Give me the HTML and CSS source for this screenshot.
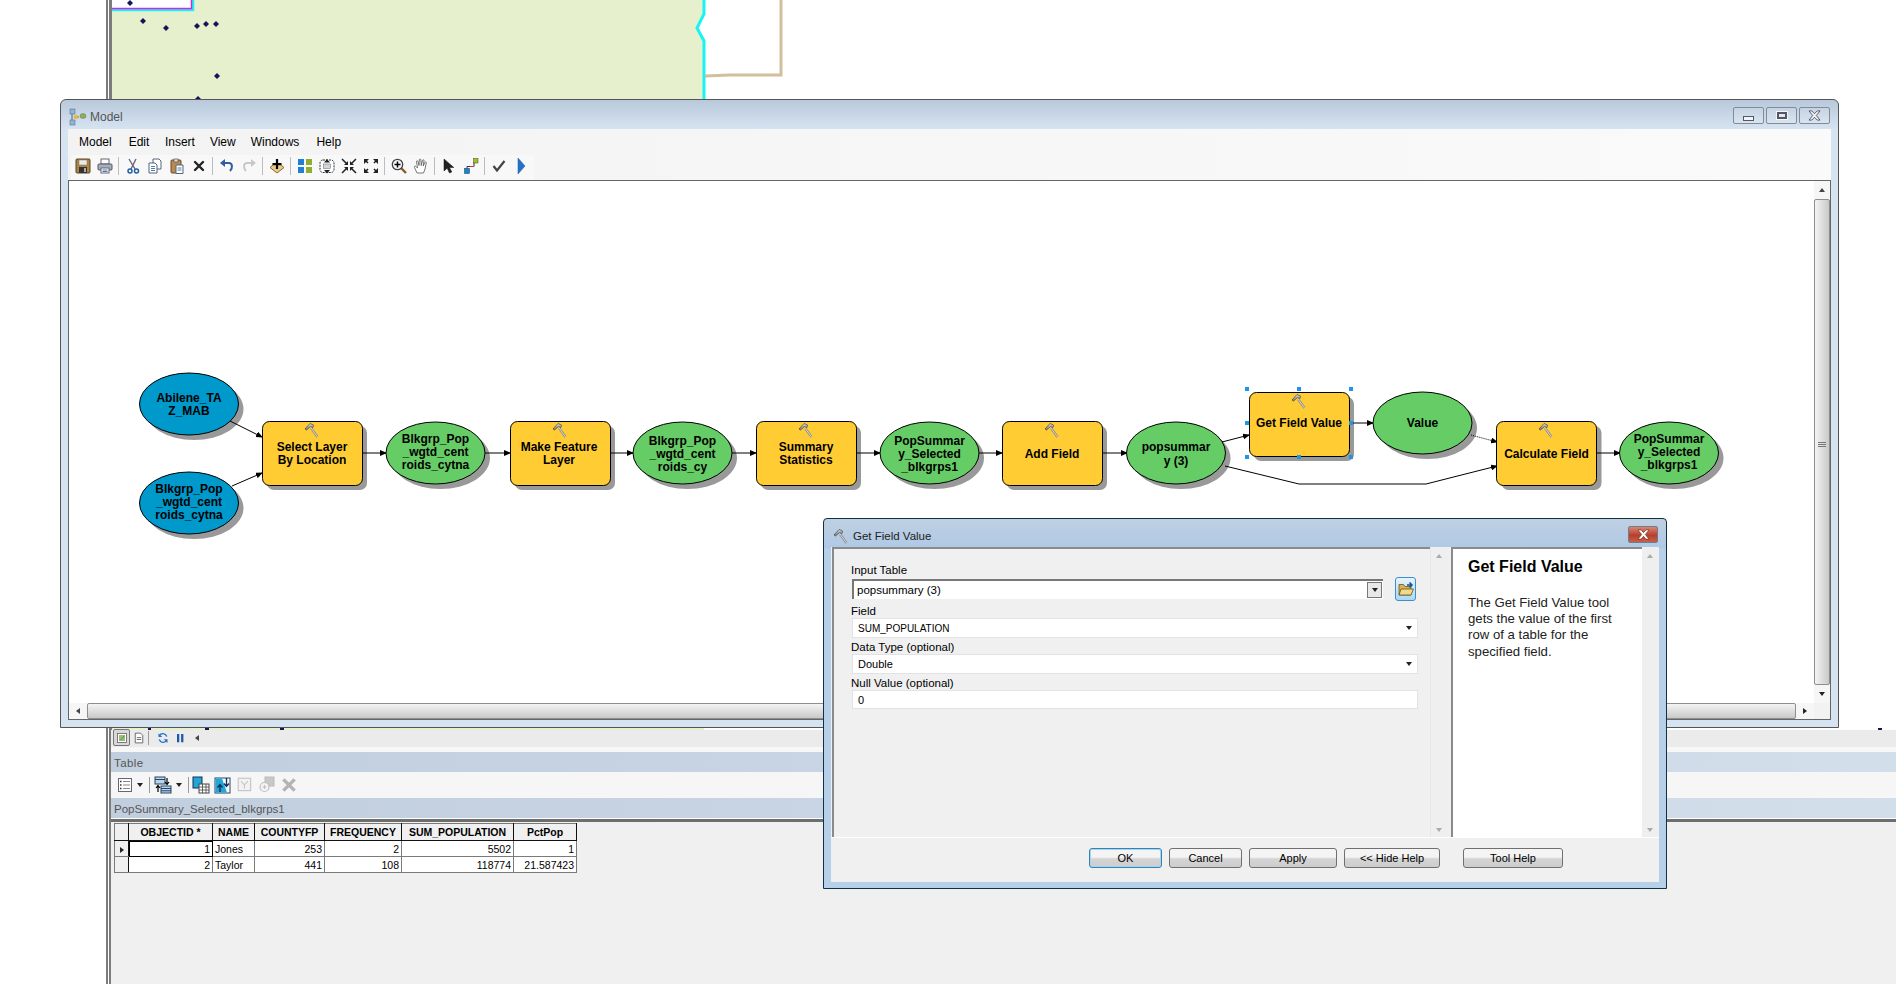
FILE: index.html
```html
<!DOCTYPE html>
<html lang="en">
<head>
<meta charset="utf-8">
<title>Model</title>
<link rel="stylesheet" href="styles.css">
</head>
<body>
<svg class="defs" aria-hidden="true">
  <defs>
    <linearGradient id="gHead" x1="0" y1="0" x2="0" y2="1"><stop offset="0" stop-color="#ddd"/><stop offset="1" stop-color="#777"/></linearGradient>
    <marker id="ah" markerWidth="7" markerHeight="6" refX="6" refY="3" orient="auto" markerUnits="userSpaceOnUse"><path d="M0 0L7 3L0 6Z" fill="#000"/></marker>
    <symbol id="i-hammer" viewBox="0 0 16 16"><path d="M7 6L13.500 15" stroke="#8a8a8a" stroke-width="2.200" fill="none"/><path d="M7 6L13.500 15" stroke="#e8e8e8" stroke-width=".8" fill="none"/><path d="M1 7L6 1.500L9.500 3L9 5.500L6.500 4.500L2.500 8Z" fill="url(#gHead)" stroke="#444" stroke-width=".7"/></symbol>
    <symbol id="i-save" viewBox="0 0 16 16"><rect x="1" y="1" width="14" height="14" rx="1" fill="#a9854a" stroke="#5b4520"/><rect x="4" y="2" width="8" height="5" fill="#e9e9e9" stroke="#8a7a5a" stroke-width=".5"/><rect x="4" y="9" width="8" height="6" fill="#333"/><rect x="9" y="10" width="2" height="4" fill="#aaa"/></symbol>
    <symbol id="i-print" viewBox="0 0 16 16"><rect x="4" y="1" width="8" height="5" fill="#fff" stroke="#667"/><rect x="1" y="6" width="14" height="6" rx="1" fill="#a8b0b8" stroke="#556"/><rect x="4" y="10" width="8" height="5" fill="#fff" stroke="#667"/><path d="M5.500 12h5M5.500 13.500h5" stroke="#4a7fb5"/></symbol>
    <symbol id="i-cut" viewBox="0 0 16 16"><path d="M4 1L10 11M11 1L6 11" stroke="#667" stroke-width="1.400" fill="none"/><circle cx="5" cy="13" r="2" fill="none" stroke="#1f5fa8" stroke-width="1.500"/><circle cx="11.500" cy="13" r="2" fill="none" stroke="#1f5fa8" stroke-width="1.500"/></symbol>
    <symbol id="i-copy" viewBox="0 0 16 16"><path d="M6 1h6l2 2v8H6Z" fill="#fff" stroke="#567"/><path d="M2 5h6l2 2v8H2Z" fill="#fff" stroke="#567"/><path d="M4 8.500h4M4 10.500h4M4 12.500h4" stroke="#4a7fb5"/></symbol>
    <symbol id="i-paste" viewBox="0 0 16 16"><rect x="2" y="2" width="10" height="13" rx="1" fill="#b98a55" stroke="#6b4a25"/><rect x="5" y="1" width="4" height="3" fill="#ddd" stroke="#555" stroke-width=".7"/><path d="M7 7h7v8.500H7Z" fill="#fff" stroke="#567"/><path d="M8.500 10h4M8.500 12h4" stroke="#4a7fb5"/></symbol>
    <symbol id="i-del" viewBox="0 0 16 16"><path d="M4 4L12 12M12 4L4 12" stroke="#222" stroke-width="2.400" stroke-linecap="round"/></symbol>
    <symbol id="i-undo" viewBox="0 0 16 16"><path d="M5 5H10C13.500 5 14 10 11 13" stroke="#2f5f9e" stroke-width="2" fill="none"/><path d="M6 1L1 5L6 9Z" fill="#2f5f9e"/></symbol>
    <symbol id="i-redo" viewBox="0 0 16 16"><path d="M11 5H6C2.500 5 2 10 5 13" stroke="#c8c8c8" stroke-width="2" fill="none"/><path d="M10 1L15 5L10 9Z" fill="#c8c8c8"/></symbol>
    <symbol id="i-add" viewBox="0 0 16 16"><path d="M8 15L15 9.500L12 7H4L1 9.500Z" fill="#e9c98a" stroke="#8a6a30"/><path d="M8 1V11M3.500 6H12.500" stroke="#000" stroke-width="2.200"/></symbol>
    <symbol id="i-grid" viewBox="0 0 16 16"><rect x="1" y="1" width="6" height="6" fill="#1f7fd6"/><rect x="9" y="1" width="6" height="6" fill="#8fae2e"/><rect x="1" y="9" width="6" height="6" fill="#1f7fd6"/><rect x="9" y="9" width="6" height="6" fill="#8fae2e"/></symbol>
    <symbol id="i-fit" viewBox="0 0 16 16"><rect x="1" y="2" width="14" height="12.500" rx="3" fill="#fff" stroke="#333" stroke-dasharray="2 1"/><path d="M8 1L5 4.500H11ZM8 15.500L5 12H11Z" fill="#222"/><rect x="4.500" y="6" width="7" height="4.500" fill="#cfd6dc" stroke="#666" stroke-width=".5"/></symbol>
    <symbol id="i-in" viewBox="0 0 16 16"><path d="M1 1L6 6M15 1L10 6M1 15L6 10M15 15L10 10" stroke="#222" stroke-width="1.500"/><path d="M7 7H3L7 3ZM9 7H13L9 3ZM7 9H3L7 13ZM9 9H13L9 13Z" fill="#222"/></symbol>
    <symbol id="i-out" viewBox="0 0 16 16"><path d="M5 5L2 2M11 5L14 2M5 11L2 14M11 11L14 14" stroke="#222" stroke-width="1.500"/><path d="M1 1H6L1 6ZM15 1H10L15 6ZM1 15H6L1 10ZM15 15H10L15 10Z" fill="#222"/></symbol>
    <symbol id="i-zoom" viewBox="0 0 16 16"><path d="M10 10L15 15" stroke="#8a5a2a" stroke-width="2.400"/><circle cx="6.500" cy="6.500" r="5.200" fill="#f4f8fc" stroke="#444" stroke-width="1.300"/><path d="M6.500 3.500V9.500M3.500 6.500H9.500" stroke="#000" stroke-width="1.500"/></symbol>
    <symbol id="i-hand" viewBox="0 0 16 16"><path d="M4 15L1.500 9.500C1 8 2.500 7.500 3.500 9L4.500 10L3.500 3.500C3.500 2.500 4.800 2.500 5 3.500L6 7.500L6.300 1.800C6.500 .8 7.800 .8 7.900 1.800L8.200 7.500L9.600 2.300C9.900 1.400 11 1.600 11 2.600L10.200 8L12 4.300C12.500 3.500 13.500 4 13.300 4.800L12 11L10.500 15Z" fill="#fff" stroke="#555" stroke-width=".8"/></symbol>
    <symbol id="i-sel" viewBox="0 0 16 16"><path d="M3 1V13L6.200 10.200L8.500 15L10.800 14L8.500 9.500H12.800Z" fill="#222" stroke="#111" stroke-width=".5"/></symbol>
    <symbol id="i-conn" viewBox="0 0 16 16"><path d="M4 11V8.500H11V4" fill="none" stroke="#333" stroke-width="1"/><path d="M7 8.500H11" stroke="#c33"/><rect x="1.500" y="10.500" width="5" height="5" fill="#1f7fd6" stroke="#145" stroke-width=".5"/><rect x="10.500" y=".5" width="4.500" height="4.500" fill="#9bbf2e" stroke="#450" stroke-width=".5"/></symbol>
    <symbol id="i-check" viewBox="0 0 16 16"><path d="M2.500 8L6 12.500L13.500 3" fill="none" stroke="#444" stroke-width="2.200"/></symbol>
    <symbol id="i-run" viewBox="0 0 16 16"><path d="M5 0L12 8L5 16Z" fill="#2472c8" stroke="#1a5ea8" stroke-width=".5"/></symbol>
    <symbol id="i-model" viewBox="0 0 18 18"><rect x="1" y="1" width="5" height="5" fill="#8cb4dc" stroke="#567" stroke-width=".5"/><rect x="1" y="12" width="5" height="5" fill="#8cb4dc" stroke="#567" stroke-width=".5"/><path d="M3 6V12M6 9H10" stroke="#567"/><ellipse cx="7" cy="9" rx="2.500" ry="2" fill="#e8b83a"/><ellipse cx="14" cy="8" rx="3" ry="2.500" fill="#8fb04a" stroke="#567" stroke-width=".4"/></symbol>
    <symbol id="i-folder" viewBox="0 0 16 16"><path d="M1 14V3.500H5.500L7 5.500H13V14Z" fill="#d9b34d" stroke="#6b5420" stroke-width=".8"/><path d="M1 14L3 8H15.500L13 14Z" fill="#f1d98a" stroke="#6b5420" stroke-width=".8"/><path d="M9 4H13M11.500 1.500L14 4L11.500 6.500" fill="none" stroke="#1d4f96" stroke-width="1.500"/></symbol>
    <symbol id="i-list" viewBox="0 0 16 16"><rect x="1.500" y="1.500" width="13" height="13" fill="#fff" stroke="#667"/><path d="M6 4.500H13M6 8H13M6 11.500H13" stroke="#888"/><path d="M3 4.500h1.500M3 8h1.500M3 11.500h1.500" stroke="#333" stroke-width="1.400"/></symbol>
    <symbol id="i-relate" viewBox="0 0 18 18"><rect x="1" y="1" width="10" height="7" fill="#bcd4ea" stroke="#246"/><rect x="7" y="10" width="10" height="7" fill="#bcd4ea" stroke="#246"/><path d="M1 3.500H11M7 12.500H17M7 14.800H17" stroke="#246"/><path d="M13 2V8M11 6L13 8.500L15 6" fill="none" stroke="#000" stroke-width="1.200"/><path d="M4 16V10M2 12L4 9.500L6 12" fill="none" stroke="#000" stroke-width="1.200"/></symbol>
    <symbol id="i-selattr" viewBox="0 0 18 18"><rect x="1" y="1" width="9" height="11" fill="#23a5d6" stroke="#135"/><rect x="7" y="8" width="10" height="9" fill="#fff" stroke="#444"/><path d="M7 11H17M7 14H17M10.500 8V17M14 8V17" stroke="#444" stroke-width=".8"/></symbol>
    <symbol id="i-switch" viewBox="0 0 18 18"><rect x="1" y="2" width="15" height="15" fill="#fff" stroke="#246"/><path d="M1.500 2.500H8L13 16.500H1.500Z" fill="#23a5d6"/><path d="M12.500 2V10M10 7.500L12.500 10.500L15 7.500M6 16V9M3.500 11.500L6 8.500L8.500 11.500" fill="none" stroke="#12335e" stroke-width="1.400"/></symbol>
    <symbol id="i-filter" viewBox="0 0 16 16"><rect x="2" y="2" width="11" height="11" fill="#f2f2f2" stroke="#c4c4c4"/><path d="M4.500 4.500L7.500 8V11M10.500 4.500L7.500 8" fill="none" stroke="#c4c4c4"/></symbol>
    <symbol id="i-zoomsel" viewBox="0 0 18 18"><rect x="7" y="1" width="9" height="9" fill="#c8c8c8" stroke="#bbb"/><circle cx="6.500" cy="11" r="4.500" fill="#f4f4f4" stroke="#c0c0c0" stroke-width="1.200"/><path d="M4.500 11H8.500M6.500 9V13" stroke="#c0c0c0"/></symbol>
    <symbol id="i-x" viewBox="0 0 16 16"><path d="M3 3L13 13M13 3L3 13" stroke="#b4b4b4" stroke-width="3"/></symbol>
    <symbol id="i-mapview" viewBox="0 0 16 16"><rect x="2" y="2" width="12" height="12" fill="#fff" stroke="#555"/><rect x="4" y="4" width="8" height="8" fill="#9cbf6a"/><path d="M6 11L11 5" stroke="#2472c8"/></symbol>
    <symbol id="i-layout" viewBox="0 0 16 16"><path d="M3 1.500H10L13 4.500V14.500H3Z" fill="#fff" stroke="#444"/><path d="M5 7.500H11M5 10H11" stroke="#444"/></symbol>
    <symbol id="i-refresh" viewBox="0 0 16 16"><path d="M13 6A5.500 5.500 0 0 0 3 5M3 10A5.500 5.500 0 0 0 13 11" fill="none" stroke="#2472c8" stroke-width="1.800"/><path d="M2 1.500V6.500H7Z M14 14.500V9.500H9Z" fill="#2472c8"/></symbol>
    <symbol id="i-pause" viewBox="0 0 16 16"><path d="M4 2.500H7V13.500H4ZM9.500 2.500H12.500V13.500H9.500Z" fill="#1d55a8"/></symbol>
  </defs>
</svg>

<div class="app">
  <div class="map">
    <svg class="map-svg" viewBox="111 0 1785 730" width="1785" height="730">
      <rect class="m-rule" x="111" y="0" width="1" height="730"/>
      <path class="m-land" d="M112 0H704V14L697 28L704 41V730H112Z"/>
      <path class="m-edge" d="M704 0V14L697 28L704 41V728"/>
      <path class="m-tan" d="M705 76L730 75H781V0"/>
      <rect class="m-white" x="112" y="-2" width="80" height="11"/>
      <path class="m-cyan" d="M112 10H193V0"/>
      <path class="m-mag" d="M112 8.500H191.500V0"/>
      <g class="m-dots">
        <path d="M130 0l3 3-3 3-3-3Z"/><path d="M143 18l3 3-3 3-3-3Z"/><path d="M166 25l3 3-3 3-3-3Z"/>
        <path d="M197 23l3 3-3 3-3-3Z"/><path d="M206 21l3 3-3 3-3-3Z"/><path d="M216 21l3 3-3 3-3-3Z"/>
        <path d="M217 73l3 3-3 3-3-3Z"/><path d="M198 96l3 3-3 3-3-3Z"/><rect x="148" y="728" width="3" height="2"/><rect x="205" y="728" width="4" height="2"/><rect x="280" y="728" width="4" height="2"/><rect x="1878" y="728" width="4" height="2"/>
      </g>
    </svg>
  </div>
  <div class="view-bar">
    <span class="view-active"><svg class="ic14"><use href="#i-mapview"/></svg></span>
    <svg class="ic14"><use href="#i-layout"/></svg>
    <span class="sep-view"></span>
    <svg class="ic14"><use href="#i-refresh"/></svg>
    <svg class="ic14 pause"><use href="#i-pause"/></svg>
    <span class="tri-l view-tri"></span>
  </div>
  <div class="strip"></div>
  <div class="band band-tall">Table</div>
  <div class="table-tools">
    <svg class="ic16"><use href="#i-list"/></svg><span class="tri-d"></span>
    <span class="sep-tool"></span>
    <svg class="ic18"><use href="#i-relate"/></svg><span class="tri-d"></span>
    <span class="sep-tool"></span>
    <svg class="ic18 first-group"><use href="#i-selattr"/></svg>
    <svg class="ic18"><use href="#i-switch"/></svg>
    <svg class="ic18"><use href="#i-filter"/></svg>
    <svg class="ic18"><use href="#i-zoomsel"/></svg>
    <svg class="ic18"><use href="#i-x"/></svg>
  </div>
  <div class="band">PopSummary_Selected_blkgrps1</div>
  <div class="grid-area">
    <table class="grid">
      <colgroup><col class="c0"><col class="c1"><col class="c2"><col class="c3"><col class="c4"><col class="c5"><col class="c6"></colgroup>
      <thead>
        <tr><th></th><th>OBJECTID *</th><th>NAME</th><th>COUNTYFP</th><th>FREQUENCY</th><th>SUM_POPULATION</th><th>PctPop</th></tr>
      </thead>
      <tbody>
        <tr><th class="rowhead"><span class="tri-r"></span></th><td class="num active">1</td><td>Jones</td><td class="num">253</td><td class="num">2</td><td class="num">5502</td><td class="num">1</td></tr>
        <tr><th class="rowhead"></th><td class="num">2</td><td>Taylor</td><td class="num">441</td><td class="num">108</td><td class="num">118774</td><td class="num">21.587423</td></tr>
      </tbody>
    </table>
  </div>
</div>

<section class="model">
  <header class="model-title">
    <svg class="ic-model"><use href="#i-model"/></svg>
    <span class="model-name">Model</span>
    <div class="win-btns">
      <span class="win-btn"><span class="g-min"></span></span>
      <span class="win-btn"><span class="g-max"></span></span>
      <span class="win-btn"><svg class="g-x" viewBox="0 0 16 12"><path d="M2 1H5L8 4L11 1H14L10 6L14 11H11L8 8L5 11H2L6 6Z" fill="#eef2f6" stroke="#445" stroke-width=".9"/></svg></span>
    </div>
  </header>
  <div class="model-inner">
    <nav class="menu"><span>Model</span><span>Edit</span><span>Insert</span><span>View</span><span>Windows</span><span>Help</span></nav>
    <div class="tools-row">
      <div class="tools">
        <svg class="tb"><use href="#i-save"/></svg>
        <svg class="tb"><use href="#i-print"/></svg>
        <i class="tsep"></i>
        <svg class="tb"><use href="#i-cut"/></svg>
        <svg class="tb"><use href="#i-copy"/></svg>
        <svg class="tb"><use href="#i-paste"/></svg>
        <svg class="tb"><use href="#i-del"/></svg>
        <i class="tsep"></i>
        <svg class="tb"><use href="#i-undo"/></svg>
        <svg class="tb"><use href="#i-redo"/></svg>
        <i class="tsep"></i>
        <svg class="tb"><use href="#i-add"/></svg>
        <i class="tsep"></i>
        <svg class="tb"><use href="#i-grid"/></svg>
        <svg class="tb"><use href="#i-fit"/></svg>
        <svg class="tb"><use href="#i-in"/></svg>
        <svg class="tb"><use href="#i-out"/></svg>
        <i class="tsep"></i>
        <svg class="tb"><use href="#i-zoom"/></svg>
        <svg class="tb"><use href="#i-hand"/></svg>
        <i class="tsep"></i>
        <svg class="tb"><use href="#i-sel"/></svg>
        <svg class="tb"><use href="#i-conn"/></svg>
        <i class="tsep"></i>
        <svg class="tb"><use href="#i-check"/></svg>
        <svg class="tb"><use href="#i-run"/></svg>
      </div>
    </div>
    <div class="canvas">
      <svg class="diagram" viewBox="69 181 1745 522" width="1745" height="522">
        <g class="shadow">
          <ellipse cx="194" cy="409" rx="49.500" ry="31"/><ellipse cx="194" cy="508" rx="49.500" ry="31"/>
          <rect x="267" y="426" width="100" height="64" rx="7"/><ellipse cx="440.500" cy="458" rx="49.500" ry="31"/>
          <rect x="515" y="426" width="100" height="64" rx="7"/><ellipse cx="687.500" cy="458" rx="49.500" ry="31"/>
          <rect x="761" y="426" width="100" height="64" rx="7"/><ellipse cx="934.500" cy="458" rx="49.500" ry="31"/>
          <rect x="1007" y="426" width="100" height="64" rx="7"/><ellipse cx="1181" cy="458" rx="49.500" ry="31"/>
          <rect x="1254" y="397" width="100" height="64" rx="7"/><ellipse cx="1427.500" cy="428" rx="49.500" ry="31"/>
          <rect x="1501.500" y="426" width="100" height="64" rx="7"/><ellipse cx="1674" cy="458" rx="49.500" ry="31"/>
        </g>
        <g class="links">
          <path d="M230 421L262 437" marker-end="url(#ah)"/>
          <path d="M232 486L262 473" marker-end="url(#ah)"/>
          <path d="M362 453H386" marker-end="url(#ah)"/>
          <path d="M485 453H510" marker-end="url(#ah)"/>
          <path d="M732 453H756" marker-end="url(#ah)"/>
          <path d="M856 453H880" marker-end="url(#ah)"/>
          <path d="M979 453H1002" marker-end="url(#ah)"/>
          <path d="M1102 453H1127" marker-end="url(#ah)"/>
          <path d="M609 453H633" marker-end="url(#ah)"/>
          <path d="M1222 442L1249 435" marker-end="url(#ah)"/>
          <path d="M1349 423H1373" marker-end="url(#ah)"/>
          <path class="dotted" d="M1471 435L1497 442" marker-end="url(#ah)"/>
          <path d="M1225 466L1299 484H1426L1497 466" marker-end="url(#ah)"/>
          <path d="M1596 453H1620" marker-end="url(#ah)"/>
        </g>
        <g class="n-blue"><ellipse cx="189" cy="404" rx="49.500" ry="31"/><ellipse cx="189" cy="503" rx="49.500" ry="31"/></g>
        <g class="n-green">
          <ellipse cx="435.500" cy="453" rx="49.500" ry="31"/><ellipse cx="682.500" cy="453" rx="49.500" ry="31"/>
          <ellipse cx="929.500" cy="453" rx="49.500" ry="31"/><ellipse cx="1176" cy="453" rx="49.500" ry="31"/>
          <ellipse cx="1422.500" cy="423" rx="49.500" ry="31"/><ellipse cx="1669" cy="453" rx="49.500" ry="31"/>
        </g>
        <g class="n-yellow" transform="translate(.5 .5)">
          <rect x="262" y="421" width="100" height="64" rx="7"/><rect x="510" y="421" width="100" height="64" rx="7"/>
          <rect x="756" y="421" width="100" height="64" rx="7"/><rect x="1002" y="421" width="100" height="64" rx="7"/>
          <rect x="1249" y="392" width="100" height="64" rx="7"/><rect x="1496" y="421" width="100" height="64" rx="7"/>
        </g>
        <use href="#i-hammer" x="304" y="422" width="16" height="16"/>
        <use href="#i-hammer" x="552" y="422" width="16" height="16"/>
        <use href="#i-hammer" x="798" y="422" width="16" height="16"/>
        <use href="#i-hammer" x="1044" y="422" width="16" height="16"/>
        <use href="#i-hammer" x="1291" y="393" width="16" height="16"/>
        <use href="#i-hammer" x="1538" y="422" width="16" height="16"/>
        <g class="handles">
          <rect x="1245" y="387" width="4" height="4"/><rect x="1297" y="387" width="4" height="4"/><rect x="1349" y="387" width="4" height="4"/>
          <rect x="1245" y="421" width="4" height="4"/><rect x="1349" y="421" width="4" height="4"/>
          <rect x="1245" y="455" width="4" height="4"/><rect x="1297" y="455" width="4" height="4"/><rect x="1349" y="455" width="4" height="4"/>
        </g>
        <g class="labels">
          <text x="189" y="402">Abilene_TA</text><text x="189" y="415">Z_MAB</text>
          <text x="189" y="493">Blkgrp_Pop</text><text x="189" y="506">_wgtd_cent</text><text x="189" y="519">roids_cytna</text>
          <text x="312" y="451">Select Layer</text><text x="312" y="464">By Location</text>
          <text x="435.500" y="443">Blkgrp_Pop</text><text x="435.500" y="456">_wgtd_cent</text><text x="435.500" y="469">roids_cytna</text>
          <text x="559" y="451">Make Feature</text><text x="559" y="464">Layer</text>
          <text x="682.500" y="445">Blkgrp_Pop</text><text x="682.500" y="458">_wgtd_cent</text><text x="682.500" y="471">roids_cy</text>
          <text x="806" y="451">Summary</text><text x="806" y="464">Statistics</text>
          <text x="929.500" y="445">PopSummar</text><text x="929.500" y="458">y_Selected</text><text x="929.500" y="471">_blkgrps1</text>
          <text x="1052" y="458">Add Field</text>
          <text x="1176" y="451">popsummar</text><text x="1176" y="465">y (3)</text>
          <text x="1299" y="427">Get Field Value</text>
          <text x="1422.500" y="427">Value</text>
          <text x="1546.500" y="458">Calculate Field</text>
          <text x="1669" y="443">PopSummar</text><text x="1669" y="456">y_Selected</text><text x="1669" y="469">_blkgrps1</text>
        </g>
      </svg>
      <div class="vbar">
        <span class="sb-end"><span class="tri-u"></span></span>
        <span class="v-thumb"></span>
        <span class="sb-end"><span class="tri-d dark"></span></span>
      </div>
      <div class="hbar">
        <span class="sb-end h"><span class="tri-l"></span></span>
        <span class="h-thumb"></span>
        <span class="sb-end h"><span class="tri-r dark"></span></span>
      </div>
      <div class="corner"></div>
    </div>
  </div>
</section>

<section class="dialog">
  <header class="dlg-title">
    <svg class="dlg-ham"><use href="#i-hammer"/></svg>
    <span class="dlg-name">Get Field Value</span>
    <span class="dlg-close"><svg class="g-dx" viewBox="0 0 14 12"><path d="M1 1H4.500L7 4L9.500 1H13L9 6L13 11H9.500L7 8L4.500 11H1L5 6Z" fill="#fff" stroke="#6b2a20" stroke-width=".7"/></svg></span>
  </header>
  <div class="dlg-body">
    <div class="dlg-panes">
      <div class="params">
        <div class="lbl first">Input Table</div>
        <div class="combo-row">
          <div class="combo"><span class="combo-text">popsummary (3)</span><span class="combo-btn"><span class="tri-d dark"></span></span></div>
          <span class="browse"><svg class="ic16"><use href="#i-folder"/></svg></span>
        </div>
        <div class="lbl">Field</div>
        <div class="sel"><span class="caps">SUM_POPULATION</span><span class="tri-d dark"></span></div>
        <div class="lbl">Data Type (optional)</div>
        <div class="sel"><span>Double</span><span class="tri-d dark"></span></div>
        <div class="lbl">Null Value (optional)</div>
        <div class="sel input"><span>0</span></div>
      </div>
      <div class="dlg-scroll"><span class="tri-u pale"></span><span class="tri-d pale"></span></div>
      <div class="help">
        <h2 class="help-h">Get Field Value</h2>
        <p class="help-p">The Get Field Value tool gets the value of the first row of a table for the specified field.</p>
      </div>
      <div class="dlg-scroll right"><span class="tri-u pale"></span><span class="tri-d pale"></span></div>
    </div>
    <div class="dlg-btns">
      <button class="btn def w-ok">OK</button>
      <button class="btn w-ok">Cancel</button>
      <button class="btn w-apply">Apply</button>
      <button class="btn w-hide">&lt;&lt; Hide Help</button>
      <button class="btn w-tool">Tool Help</button>
    </div>
  </div>
</section>
</body>
</html>
```

FILE: styles.css
```css
html, body {
  margin: 0;
  padding: 0;
  width: 1896px;
  height: 984px;
  overflow: hidden;
  background: #fff;
  font-family: "Liberation Sans", Arial, sans-serif;
  color: #000;
}
.defs { position: absolute; width: 0; height: 0; }

/* background application */
.app {
  position: absolute;
  left: 106px;
  top: 0;
  right: 0;
  bottom: 0;
  display: flex;
  flex-direction: column;
  border-left: 5px double #7c7c7c;
}
.map { height: 730px; flex: none; }
.map-svg { display: block; }
.m-rule { fill: #7c7c7c; }
.m-land { fill: #e6f0cd; }
.m-edge { fill: none; stroke: #19f3f3; stroke-width: 3; }
.m-tan { fill: none; stroke: #d2c09c; stroke-width: 3; }
.m-white { fill: #fff; }
.m-cyan { fill: none; stroke: #19f3f3; stroke-width: 2.5; }
.m-mag { fill: none; stroke: #e020e0; stroke-width: 1.5; }
.m-dots { fill: #14145a; }

.view-bar {
  height: 17px;
  flex: none;
  box-sizing: border-box;
  padding: 0 0 2px 2px;
  display: flex;
  align-items: center;
  gap: 3px;
  background: #ebebeb;
}
.view-active {
  width: 15px;
  height: 15px;
  box-sizing: content-box;
  display: flex;
  align-items: center;
  justify-content: center;
  border: 1px solid #777;
  border-radius: 2px;
  background: #d8d8d8;
  flex: none;
}
.ic14 { width: 12px; height: 12px; flex: none; }
.pause { margin-left: 2px; }
.view-tri { margin-left: 6px; }
.sep-view { width: 1px; height: 14px; background: #9a9a9a; margin-right: 5px; flex: none; }
.strip { height: 5px; flex: none; background: #f7f7f7; }
.band {
  height: 20px;
  flex: none;
  padding-left: 3px;
  line-height: 22px;
  font-size: 11.5px;
  color: #555;
  background: linear-gradient(90deg, #c1cede, #d3deeb);
}
.band-tall { letter-spacing: .4px; }
.table-tools {
  height: 26px;
  flex: none;
  display: flex;
  align-items: center;
  gap: 4px;
  padding-left: 6px;
  background: #f6f6f6;
}
.table-tools .tri-d { margin-left: 0; }
.sep-tool { width: 1px; height: 16px; background: #9a9a9a; margin-left: 2px; flex: none; }
.first-group { margin-left: -1px; }
.ic16 { width: 16px; height: 16px; flex: none; }
.ic18 { width: 18px; height: 18px; flex: none; }
.grid-area {
  flex: 1;
  padding: 1px 0 0 3px;
  border-top: 3px solid #6e6e6e;
  margin-top: 1px;
  background: #f0f0f0;
}
.grid {
  border-collapse: collapse;
  table-layout: fixed;
  width: 463px;
  font-size: 10.5px;
}
.c0 { width: 14px; }
.c1 { width: 84px; }
.c2 { width: 42px; }
.c3 { width: 70px; }
.c4 { width: 77px; }
.c5 { width: 112px; }
.c6 { width: 63px; }
.grid th, .grid td {
  border: 1px solid #7a7a7a;
  padding: 0 2px;
  line-height: 14px;
  height: 16px;
  box-sizing: border-box;
  overflow: hidden;
  white-space: nowrap;
}
.grid thead th {
  height: 17px;
  background: #f0f0f0;
  font-weight: 700;
  border-right-color: #111;
  border-bottom-color: #111;
  text-align: center;
}
.grid td { background: #fff; }
.grid .rowhead { background: #f0f0f0; border-right-color: #111; }
.grid .num { text-align: right; }
.grid .active { outline: 1px solid #000; outline-offset: -1px; }

/* model window */
.model {
  position: absolute;
  left: 60px;
  top: 99px;
  width: 1779px;
  height: 629px;
  box-sizing: border-box;
  border: 1px solid #555;
  border-radius: 6px 6px 0 0;
  display: flex;
  flex-direction: column;
  background: linear-gradient(#b9c9db, #d6e3f1 29px);
}
.model-title {
  height: 29px;
  box-sizing: border-box;
  flex: none;
  display: flex;
  align-items: center;
  padding: 5px 8px 0 8px;
  font-size: 12px;
  color: #555;
}
.ic-model { width: 18px; height: 18px; flex: none; }
.model-name { margin-left: 3px; }
.win-btns { margin-left: auto; margin-top: -3px; display: flex; gap: 2px; }
.win-btn {
  width: 29px;
  height: 15px;
  border: 1px solid #7e8c9c;
  border-radius: 2px;
  background: linear-gradient(#c5d3e2, #d9e4ef);
  display: flex;
  align-items: center;
  justify-content: center;
}
.g-min { width: 9px; height: 3px; margin-top: 6px; background: #f2f5f8; border: 1px solid #556; }
.g-max { width: 6px; height: 3px; border: 2px solid #556; background: #dfe7ef; outline: 1px solid #f4f7fa; }
.g-x { width: 15px; height: 11px; }
.model-inner {
  flex: 1;
  min-height: 0;
  display: flex;
  flex-direction: column;
  margin: 0 7px 7px 7px;
}
.menu {
  height: 26px;
  flex: none;
  display: flex;
  align-items: center;
  background: linear-gradient(90deg, #f3f3f3, #fafafa);
  font-size: 12px;
}
.menu span:nth-child(1) { margin-left: 11px; }
.menu span:nth-child(2) { margin-left: 17px; }
.menu span:nth-child(3) { margin-left: 15.5px; }
.menu span:nth-child(4) { margin-left: 15px; }
.menu span:nth-child(5) { margin-left: 15px; }
.menu span:nth-child(6) { margin-left: 17px; }
.tools-row {
  height: 25px;
  flex: none;
  background: linear-gradient(90deg, #f3f3f3, #fafafa);
}
.tools {
  width: 463px;
  height: 25px;
  margin-left: 3px;
  padding: 0 0 3px 1px;
  box-sizing: border-box;
  display: flex;
  align-items: center;
  background: #f8f8f8;
  border-radius: 3px 3px 0 0;
}
.tb { width: 16px; height: 16px; margin: 0 3px; flex: none; }
.tsep { width: 1px; height: 18px; background: #bdbdbd; margin: 0 3px 0 2px; flex: none; }
.canvas {
  flex: 1;
  min-height: 0;
  display: grid;
  grid-template-columns: 1745px 1fr;
  grid-template-rows: 522px 1fr;
  border: 1px solid #666;
  background: #fff;
}
.diagram { display: block; }
.shadow { fill: #999; }
.links path { fill: none; stroke: #000; stroke-width: 1; }
.links path.dotted { stroke-dasharray: 1 1; }
.n-blue { fill: #0099cc; stroke: #000; }
.n-green { fill: #66cc66; stroke: #000; }
.n-yellow { fill: #ffcc33; stroke: #000; }
.handles { fill: #1e96e6; }
.labels text {
  font-family: "Liberation Sans", Arial, sans-serif;
  font-weight: 700;
  font-size: 12px;
  text-anchor: middle;
  fill: #000;
}

/* scrollbars */
.vbar { display: flex; flex-direction: column; background: #f6f6f6; }
.hbar { display: flex; background: #f6f6f6; }
.corner { background: #f2f2f2; }
.sb-end { height: 18px; flex: none; display: flex; align-items: center; justify-content: center; }
.sb-end.h { width: 18px; height: auto; }
.v-thumb {
  flex: 1;
  position: relative;
  border: 1px solid #8e8e8e;
  border-radius: 2px;
  background: linear-gradient(90deg, #f4f4f4, #c9c9c9);
}
.v-thumb::after {
  content: "";
  position: absolute;
  left: 3px;
  right: 3px;
  top: 50%;
  height: 6px;
  background: repeating-linear-gradient(#777 0 1px, transparent 1px 2px);
}
.h-thumb {
  flex: 1;
  border: 1px solid #8e8e8e;
  border-radius: 2px;
  background: linear-gradient(#f4f4f4, #c9c9c9);
}
.tri-u, .tri-d, .tri-l, .tri-r { display: inline-block; width: 0; height: 0; border-style: solid; border-color: transparent; flex: none; }
.tri-u { border-width: 0 3.5px 4px; border-bottom-color: #444; }
.tri-d { border-width: 4px 3.5px 0; border-top-color: #222; margin-left: 3px; }
.tri-l { border-width: 3.5px 4px 3.5px 0; border-right-color: #444; }
.tri-r { border-width: 3.5px 0 3.5px 4px; border-left-color: #222; }
.sb-end .tri-d { margin-left: 0; }
.tri-u.pale { border-bottom-color: #aaa; }
.tri-d.pale { border-top-color: #aaa; margin-left: 0; }

/* dialog */
.dialog {
  position: absolute;
  left: 823px;
  top: 518px;
  width: 844px;
  height: 371px;
  box-sizing: border-box;
  border: 1px solid #123040;
  border-radius: 4px 4px 0 0;
  display: flex;
  flex-direction: column;
  background: linear-gradient(#bfd0e2, #afc9e6 29px, #b7d0e9 30px);
}
.dlg-title {
  height: 28px;
  box-sizing: border-box;
  flex: none;
  display: flex;
  align-items: center;
  padding: 5px 8px 0;
  font-size: 11.5px;
  color: #222;
}
.dlg-ham { width: 18px; height: 16px; flex: none; }
.dlg-name { margin-left: 3px; }
.dlg-close {
  margin-left: auto;
  margin-top: -2px;
  width: 28px;
  height: 15px;
  display: flex;
  align-items: center;
  justify-content: center;
  border: 1px solid #6f7c8a;
  border-radius: 2px;
  background: linear-gradient(#dc8572, #b5402c 55%, #c9604a);
}
.g-dx { width: 13px; height: 11px; }
.dlg-body {
  flex: 1;
  min-height: 0;
  margin: 0 7px 6px 7px;
  display: flex;
  flex-direction: column;
  background: #f0f0f0;
}
.dlg-panes {
  height: 291px;
  flex: none;
  display: flex;
  border-bottom: 1px solid #fff;
  box-sizing: border-box;
}
.params {
  width: 598px;
  box-sizing: border-box;
  flex: none;
  margin-left: 1px;
  padding: 15px 0 0 18px;
  border-top: 2px solid #8a8a8a;
  border-left: 2px solid #8a8a8a;
  font-size: 11px;
  position: relative;
}
.params > .sel, .params > .combo-row { margin-right: 12px; width: 566px; }
.lbl { height: 13px; line-height: 13px; margin-left: -1px; font-size: 11.5px; }
.lbl.first { margin-bottom: 2px; }
.combo-row { display: flex; align-items: center; height: 20px; margin-bottom: 6px; }
.combo {
  width: 531px;
  height: 20px;
  box-sizing: border-box;
  display: flex;
  align-items: center;
  background: #fff;
  border-top: 2px solid #777;
  border-left: 2px solid #777;
  font-size: 11.5px;
}
.combo-text { padding-left: 3px; flex: 1; }
.combo-btn {
  width: 15px;
  height: 16px;
  margin-right: 1px;
  display: flex;
  align-items: center;
  justify-content: center;
  background: #e8e8e8;
  border: 1px solid #777;
  box-sizing: border-box;
}
.combo-btn .tri-d { margin-left: 0; }
.browse {
  margin-left: 12px;
  width: 21px;
  height: 24px;
  box-sizing: border-box;
  display: flex;
  align-items: center;
  justify-content: center;
  border: 1px solid #3c8fc8;
  border-radius: 3px;
  background: linear-gradient(#e4f4fd, #a9d9f3);
  flex: none;
}
.sel {
  height: 20px;
  box-sizing: border-box;
  margin-bottom: 3px;
  padding: 0 5px;
  display: flex;
  align-items: center;
  justify-content: space-between;
  background: #fff;
  border: 1px solid #e2e2e2;
}
.caps { font-size: 10px; }
.sel.input { height: 19px; margin-bottom: 0; }
.dlg-scroll {
  width: 17px;
  flex: none;
  display: flex;
  flex-direction: column;
  align-items: center;
  justify-content: space-between;
  padding: 7px 0 5px;
  box-sizing: border-box;
  background: #efefef;
  border-left: 1px solid #e6e6e6;
}
.dlg-scroll.right { width: 16px; border-left: 0; }
.help {
  width: 191px;
  box-sizing: border-box;
  flex: none;
  margin-left: 4px;
  padding: 8px 6px 0 15px;
  background: #fff;
  border-top: 2px solid #8a8a8a;
  border-left: 2px solid #8a8a8a;
}
.help-h { margin: 0 0 18px; font-size: 16px; font-weight: 700; line-height: 20px; }
.help-p { margin: 0; font-size: 13.2px; line-height: 16.2px; color: #222; }
.dlg-btns {
  flex: 1;
  display: flex;
  justify-content: flex-end;
  align-items: flex-start;
  gap: 7px;
  padding: 10px 96px 0 0;
}
.btn {
  height: 20px;
  padding: 0;
  box-sizing: border-box;
  border: 1px solid #707070;
  border-radius: 3px;
  background: linear-gradient(#f4f4f4 45%, #d4d4d4 55%, #cdcdcd);
  font-family: "Liberation Sans", Arial, sans-serif;
  font-size: 11px;
  color: #000;
}
.btn.def { border: 1px solid #3c7fb1; box-shadow: inset 0 0 0 1px #9fd6f3; }
.w-ok { width: 73px; }
.w-apply { width: 88px; }
.w-hide { width: 96px; }
.w-tool { width: 100px; margin-left: 16px; }
```
